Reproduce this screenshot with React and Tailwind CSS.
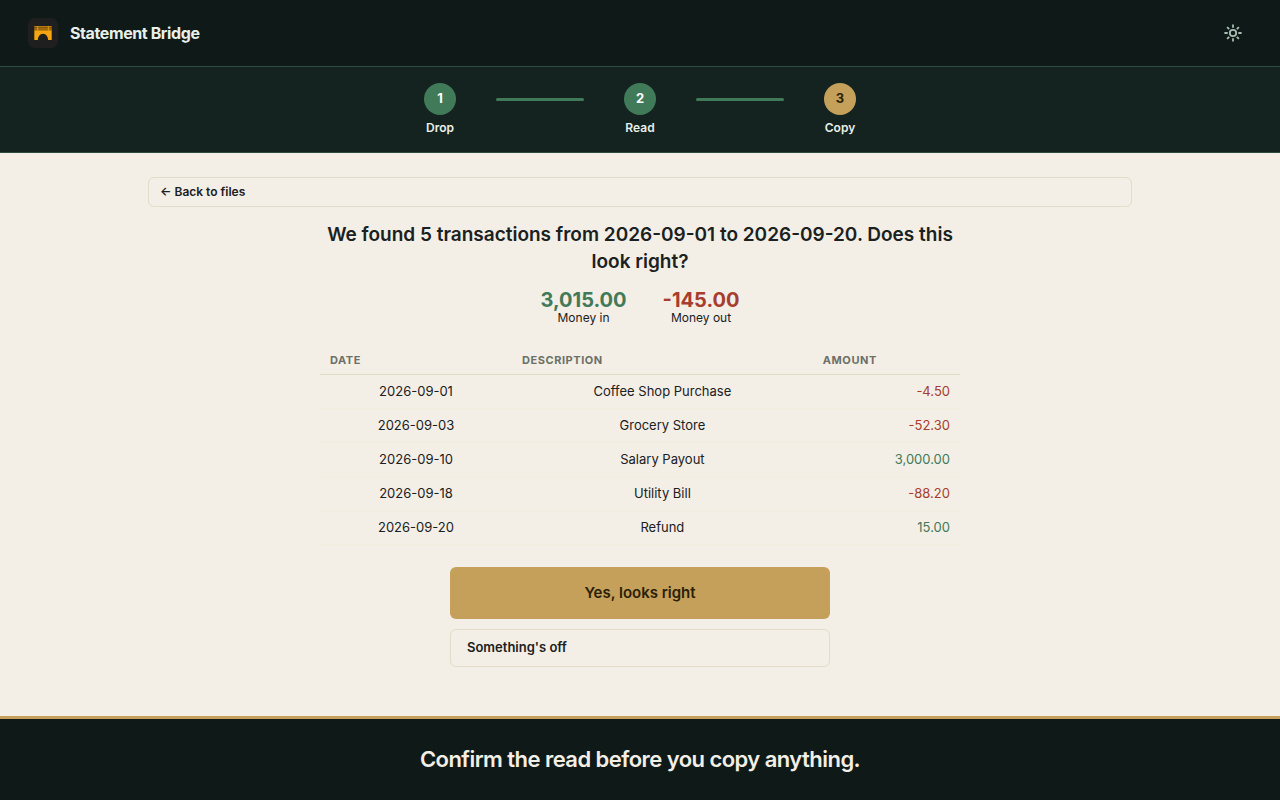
const STEPS = [
  { number: 1, label: 'Drop', done: true },
  { number: 2, label: 'Read', done: true },
  { number: 3, label: 'Copy', done: false },
];

const TRANSACTIONS = [
  { date: '2026-09-01', description: 'Coffee Shop Purchase', amount: -4.5 },
  { date: '2026-09-03', description: 'Grocery Store', amount: -52.3 },
  { date: '2026-09-10', description: 'Salary Payout', amount: 3000 },
  { date: '2026-09-18', description: 'Utility Bill', amount: -88.2 },
  { date: '2026-09-20', description: 'Refund', amount: 15 },
];

const formatAmount = (value) =>
  value.toLocaleString('en-US', { minimumFractionDigits: 2, maximumFractionDigits: 2 });

const BridgeLogo = () => (
  <svg viewBox="0 0 30 30" className="h-[30px] w-[30px]" aria-hidden="true">
    <rect width="30" height="30" rx="7" fill="#1f1f1f" />
    <path d="M6.3 8h17.4v5H6.3z" fill="#86580a" />
    <path d="M6.3 8.5h17.4M6.3 11h17.4" stroke="#bd800d" strokeWidth=".9" />
    <path d="M9.6 8v5M20.4 8v5" stroke="#d8900e" strokeWidth="1.1" />
    <path d="M6.3 12.6h17.4V22h-3.5c-.4-3.4-2.2-6.2-5.2-6.2S10.2 18.6 9.8 22H6.3z" fill="#f5a50f" />
  </svg>
);

const SunIcon = () => (
  <svg
    viewBox="0 0 18 18"
    className="h-[18px] w-[18px]"
    fill="none"
    stroke="currentColor"
    strokeWidth="1.8"
    aria-hidden="true"
  >
    <circle cx="9" cy="9" r="3.2" />
    <path d="M9 .4v3.3M9 14.3v3.3M.4 9h3.3M14.3 9h3.3M3.1 3.1l2.1 2.1M12.8 12.8l2.1 2.1M3.1 14.9l2.1-2.1M12.8 5.2l2.1-2.1" />
  </svg>
);

const Stepper = () => (
  <nav aria-label="Progress" className="border-b border-[#2c4a40] bg-[#142320] px-7 pt-4 pb-4">
    <ol className="mx-auto flex max-w-[480px] items-start">
      {STEPS.map((step, index) => (
        <li key={step.number} className={index > 0 ? 'flex flex-1 items-start' : 'flex items-start'}>
          {index > 0 && <span className="mx-4 mt-[15px] h-[3px] flex-1 rounded-sm bg-[#417a58]" />}
          <div className="flex w-20 flex-col items-center gap-[5px]">
            <span
              className={`flex h-8 w-8 items-center justify-center rounded-full text-[13px] font-bold ${
                step.done ? 'bg-[#417a58] text-white' : 'bg-[#c5a05a] text-[#2a1f08]'
              }`}
            >
              {step.number}
            </span>
            <span className="text-xs leading-4 font-semibold text-[#e8f0ea]">{step.label}</span>
          </div>
        </li>
      ))}
    </ol>
  </nav>
);

const Total = ({ value, label, className }) => (
  <div className="flex flex-col items-center">
    <span className={`text-xl leading-5 font-bold ${className}`}>{formatAmount(value)}</span>
    <span className="text-xs">{label}</span>
  </div>
);

export default function App() {
  const moneyIn = TRANSACTIONS.filter((t) => t.amount > 0).reduce((sum, t) => sum + t.amount, 0);
  const moneyOut = TRANSACTIONS.filter((t) => t.amount < 0).reduce((sum, t) => sum + t.amount, 0);

  return (
    <div className="flex min-h-screen flex-col bg-[#f3eee6] font-['Inter',sans-serif] text-[#1a211e]">
      <header className="flex items-center justify-between border-b border-[#2c4a40] bg-[#0f1a18] px-7 py-3.5">
        <div className="flex items-center gap-3">
          <BridgeLogo />
          <span className="text-base font-bold tracking-tight text-[#e8f0ea]">Statement Bridge</span>
        </div>
        <button
          type="button"
          aria-label="Toggle theme"
          className="flex h-[38px] w-[38px] items-center justify-center rounded-md text-[#a9bdb2]"
        >
          <SunIcon />
        </button>
      </header>

      <Stepper />

      <main className="mx-auto flex w-full max-w-[1032px] flex-1 flex-col px-6 py-6">
        <button
          type="button"
          className="h-[30px] w-full rounded-md border border-[#e2dcc8] px-[11px] text-left text-xs font-semibold"
        >
          ← Back to files
        </button>

        <section className="mx-auto mt-[14px] flex w-full max-w-[640px] flex-col items-center">
          <h1 className="text-center text-[19px] leading-[27px] font-semibold">
            We found {TRANSACTIONS.length} transactions from 2026-09-01 to 2026-09-20. Does this look right?
          </h1>

          <div className="mt-[15px] flex gap-9">
            <Total value={moneyIn} label="Money in" className="text-[#417a58]" />
            <Total value={moneyOut} label="Money out" className="text-[#a63d2d]" />
          </div>

          <table className="mt-5 w-full border-collapse text-[13px]">
            <thead>
              <tr className="border-b border-[#e2dcc3] text-left text-[11px] leading-3 tracking-wider text-[#6b7068] uppercase">
                <th className="w-[30%] px-2.5 py-2 font-bold">Date</th>
                <th className="w-[47%] px-2.5 py-2 font-bold">Description</th>
                <th className="w-[23%] px-2.5 py-2 font-bold">Amount</th>
              </tr>
            </thead>
            <tbody>
              {TRANSACTIONS.map((t) => (
                <tr key={t.date} className="h-[34px] border-b border-[#f1eddf] text-center">
                  <td className="px-2.5">{t.date}</td>
                  <td className="px-2.5">{t.description}</td>
                  <td className={`px-2.5 text-right ${t.amount < 0 ? 'text-[#a63d2d]' : 'text-[#417a58]'}`}>
                    {formatAmount(t.amount)}
                  </td>
                </tr>
              ))}
            </tbody>
          </table>

          <div className="mt-[22px] flex w-full max-w-[380px] flex-col gap-2.5">
            <button
              type="button"
              className="h-[52px] rounded-md bg-[#c5a05a] text-[15px] font-semibold text-[#2a1f08]"
            >
              Yes, looks right
            </button>
            <button
              type="button"
              className="h-[38px] rounded-md border border-[#e2dcc8] px-4 text-left text-[13px] font-semibold"
            >
              Something's off
            </button>
          </div>
        </section>
      </main>

      <footer className="border-t-[3px] border-[#c5a05a] bg-[#0f1a18] px-7 py-6 text-center">
        <p className="text-[22px] leading-[33px] font-semibold tracking-tight text-[#f3eee6]">
          Confirm the read before you copy anything.
        </p>
      </footer>
    </div>
  );
}
